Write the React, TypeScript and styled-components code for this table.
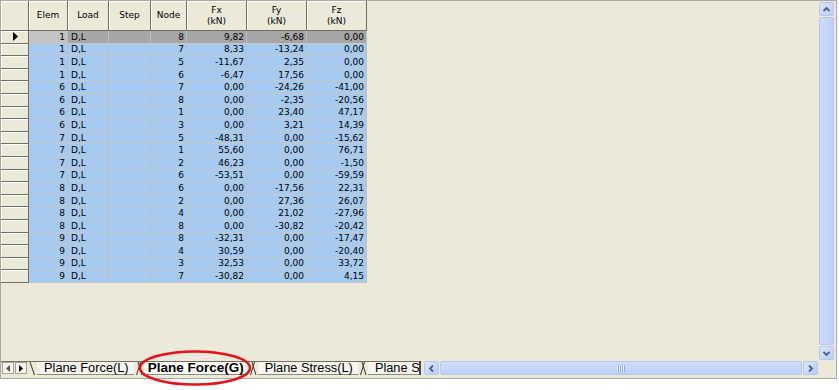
import React from 'react';
import styled, { createGlobalStyle } from 'styled-components';

const BEIGE = '#ece9d8';
const DARK = '#716f64';
const BLUE = '#a6caf0';
const ARROW = '#4d6185';

const GlobalStyle = createGlobalStyle`
  html, body {
    margin: 0;
    padding: 0;
    background: #fff;
  }
  body {
    font-family: "Liberation Sans", Arial, sans-serif;
  }
`;

const Page = styled.div`
  position: relative;
  width: 839px;
  height: 390px;
`;

const Frame = styled.div`
  width: 837px;
  height: 379px;
  box-sizing: border-box;
  border: 1px solid #a9a8a2;
  background: ${BEIGE};
  display: flex;
  flex-direction: column;
`;

const Main = styled.div`
  display: flex;
  height: 360px;
`;

const GridArea = styled.div`
  flex: 1;
  overflow: hidden;
`;

const Grid = styled.div`
  display: grid;
  grid-template-columns: 28px 39px 41px 42px 36px 60px 60px 60px;
  grid-template-rows: 30px;
  grid-auto-rows: 12.6px;
  width: 366px;
  font-family: "DejaVu Sans", Tahoma, sans-serif;
  font-size: 9px;
  color: #000;
`;

const HeadCell = styled.div`
  box-sizing: border-box;
  display: flex;
  align-items: center;
  justify-content: center;
  text-align: center;
  line-height: 11px;
  background: ${BEIGE};
  border-right: 1px solid ${DARK};
  border-bottom: 1px solid ${DARK};
  box-shadow: inset 1px 1px 0 #fff;
`;

const RowHead = styled.div`
  box-sizing: border-box;
  display: flex;
  align-items: center;
  padding-left: 12px;
  background: ${BEIGE};
  border-right: 1px solid ${DARK};
  border-bottom: 1px solid ${DARK};
  box-shadow: inset 1px 1px 0 #fff;
`;

type Tone = 'blue' | 'sel' | 'selLight';

const toneBg: Record<Tone, string> = {
  blue: BLUE,
  sel: '#a6a6a6',
  selLight: '#c4c4c4',
};

const Cell = styled.div<{ $align: 'left' | 'right'; $tone: Tone }>`
  box-sizing: border-box;
  display: flex;
  align-items: center;
  justify-content: ${(p) => (p.$align === 'right' ? 'flex-end' : 'flex-start')};
  padding: 0 2px 0 3px;
  white-space: nowrap;
  background: ${(p) => toneBg[p.$tone]};
  border-right: 1px solid #b9c0c8;
  border-bottom: 1px solid #c3c8ce;
`;

const VScroll = styled.div`
  width: 15px;
  margin: 1px 2px 1px 1px;
  display: flex;
  flex-direction: column;
  gap: 1px;
`;

const ScrollBtn = styled.div`
  width: 15px;
  height: 14px;
  box-sizing: border-box;
  border: 1px solid #b5c8f3;
  border-radius: 2px;
  background: linear-gradient(135deg, #dce6fd, #b8ccf9);
  display: flex;
  align-items: center;
  justify-content: center;
  flex-shrink: 0;
`;

const Thumb = styled.div<{ $horizontal?: boolean }>`
  flex: 1;
  box-sizing: border-box;
  border: 1px solid #b5c8f3;
  border-radius: 2px;
  background: ${(p) =>
    p.$horizontal
      ? 'linear-gradient(180deg, #cfdcfd, #bdd0fa)'
      : 'linear-gradient(90deg, #cfdcfd, #bdd0fa)'};
  display: flex;
  align-items: center;
  justify-content: center;
`;

const Bottom = styled.div`
  display: flex;
  height: 14px;
`;

const TabBar = styled.div`
  width: 418px;
  display: flex;
  overflow: hidden;
  box-sizing: border-box;
  border-top: 1px solid ${DARK};
  background: ${BEIGE};
`;

const NavBtn = styled.div`
  width: 12px;
  height: 12px;
  box-sizing: border-box;
  border: 1px solid #a5a396;
  background: #f4f3ee;
  display: flex;
  align-items: center;
  justify-content: center;
  flex-shrink: 0;
  margin-left: 1px;
`;

const Tab = styled.div<{ $active?: boolean }>`
  flex-shrink: 0;
  display: flex;
  align-items: center;
  padding: ${(p) => (p.$active ? '0 4px' : '0 5px 0 7px')};
  margin-top: ${(p) => (p.$active ? '-1px' : '0')};
  background: ${(p) => (p.$active ? '#fff' : '#f6f5f0')};
  border-bottom: 1px solid #8c8a80;
  font-size: ${(p) => (p.$active ? '13.5px' : '12.8px')};
  font-weight: ${(p) => (p.$active ? 'bold' : 'normal')};
  line-height: 12px;
  white-space: nowrap;
  color: #000;
`;

const SlantBox = styled.svg`
  flex-shrink: 0;
  display: block;
`;

const Divider = styled.div`
  width: 2px;
  background: #4a4a4a;
  margin-right: 3px;
  flex-shrink: 0;
`;

const HScroll = styled.div`
  flex: 1;
  display: flex;
  gap: 1px;
  margin-right: 1px;
`;

const Corner = styled.div`
  width: 15px;
  margin-right: 2px;
  background: ${BEIGE};
`;

const Annotation = styled.svg`
  position: absolute;
  left: 137px;
  top: 349px;
  pointer-events: none;
`;

type Row = [number, number, string, string, string];

const rows: Row[] = [
  [1, 8, '9,82', '-6,68', '0,00'],
  [1, 7, '8,33', '-13,24', '0,00'],
  [1, 5, '-11,67', '2,35', '0,00'],
  [1, 6, '-6,47', '17,56', '0,00'],
  [6, 7, '0,00', '-24,26', '-41,00'],
  [6, 8, '0,00', '-2,35', '-20,56'],
  [6, 1, '0,00', '23,40', '47,17'],
  [6, 3, '0,00', '3,21', '14,39'],
  [7, 5, '-48,31', '0,00', '-15,62'],
  [7, 1, '55,60', '0,00', '76,71'],
  [7, 2, '46,23', '0,00', '-1,50'],
  [7, 6, '-53,51', '0,00', '-59,59'],
  [8, 6, '0,00', '-17,56', '22,31'],
  [8, 2, '0,00', '27,36', '26,07'],
  [8, 4, '0,00', '21,02', '-27,96'],
  [8, 8, '0,00', '-30,82', '-20,42'],
  [9, 8, '-32,31', '0,00', '-17,47'],
  [9, 4, '30,59', '0,00', '-20,40'],
  [9, 3, '32,53', '0,00', '33,72'],
  [9, 7, '-30,82', '0,00', '4,15'],
];

const tabs = [
  { label: 'Plane Force(L)' },
  { label: 'Plane Force(G)', active: true },
  { label: 'Plane Stress(L)' },
  { label: 'Plane Stress(G)' },
];

const Chevron = ({ dir }: { dir: 'up' | 'down' | 'left' | 'right' }) => {
  const rot = { up: 0, right: 90, down: 180, left: 270 }[dir];
  return (
    <svg width="9" height="9" viewBox="0 0 9 9" style={{ transform: `rotate(${rot}deg)` }}>
      <polyline points="1.5,6 4.5,3 7.5,6" fill="none" stroke={ARROW} strokeWidth="1.8" />
    </svg>
  );
};

const Slant = ({ join }: { join?: boolean }) =>
  join ? (
    <SlantBox width="10" height="13" viewBox="0 0 10 13">
      <line x1="6.5" y1="0" x2="2.5" y2="13" stroke="#333" strokeWidth="1" />
      <line x1="4" y1="0" x2="8" y2="13" stroke="#333" strokeWidth="1" />
    </SlantBox>
  ) : (
    <SlantBox width="10" height="13" viewBox="0 0 10 13">
      <line x1="3" y1="0" x2="7.5" y2="13" stroke="#333" strokeWidth="1" />
    </SlantBox>
  );

const Grip = () => (
  <svg width="8" height="7" viewBox="0 0 8 7">
    {[0, 2, 4, 6].map((x) => (
      <g key={x}>
        <line x1={x + 0.5} y1="0" x2={x + 0.5} y2="7" stroke="#eef3fe" />
        <line x1={x + 1.5} y1="0" x2={x + 1.5} y2="7" stroke="#8caae6" />
      </g>
    ))}
  </svg>
);

const Marker = () => (
  <svg width="5" height="9" viewBox="0 0 5 9">
    <polygon points="0,0 5,4.5 0,9" fill="#000" />
  </svg>
);

const NavArrow = ({ right }: { right?: boolean }) => (
  <svg width="4" height="7" viewBox="0 0 4 7">
    <polygon points={right ? '0,0 4,3.5 0,7' : '4,0 0,3.5 4,7'} fill={right ? '#000' : '#555'} />
  </svg>
);

export default function App() {
  return (
    <Page>
      <GlobalStyle />
      <Frame>
        <Main>
          <GridArea>
            <Grid>
              <HeadCell />
              <HeadCell>Elem</HeadCell>
              <HeadCell>Load</HeadCell>
              <HeadCell>Step</HeadCell>
              <HeadCell>Node</HeadCell>
              <HeadCell>
                <span>
                  Fx
                  <br />
                  (kN)
                </span>
              </HeadCell>
              <HeadCell>
                <span>
                  Fy
                  <br />
                  (kN)
                </span>
              </HeadCell>
              <HeadCell>
                <span>
                  Fz
                  <br />
                  (kN)
                </span>
              </HeadCell>
              {rows.map(([elem, node, fx, fy, fz], i) => {
                const tone: Tone = i === 0 ? 'sel' : 'blue';
                return (
                  <React.Fragment key={i}>
                    <RowHead>{i === 0 && <Marker />}</RowHead>
                    <Cell $align="right" $tone={i === 0 ? 'selLight' : 'blue'}>
                      {elem}
                    </Cell>
                    <Cell $align="left" $tone={tone}>
                      D,L
                    </Cell>
                    <Cell $align="left" $tone={tone} />
                    <Cell $align="right" $tone={tone}>
                      {node}
                    </Cell>
                    <Cell $align="right" $tone={tone}>
                      {fx}
                    </Cell>
                    <Cell $align="right" $tone={tone}>
                      {fy}
                    </Cell>
                    <Cell $align="right" $tone={tone}>
                      {fz}
                    </Cell>
                  </React.Fragment>
                );
              })}
            </Grid>
          </GridArea>
          <VScroll>
            <ScrollBtn>
              <Chevron dir="up" />
            </ScrollBtn>
            <Thumb />
            <ScrollBtn>
              <Chevron dir="down" />
            </ScrollBtn>
          </VScroll>
        </Main>
        <Bottom>
          <TabBar>
            <NavBtn>
              <NavArrow />
            </NavBtn>
            <NavBtn>
              <NavArrow right />
            </NavBtn>
            <Slant />
            {tabs.map((t, i) => (
              <React.Fragment key={t.label}>
                {i > 0 && <Slant join />}
                <Tab $active={t.active}>{t.label}</Tab>
              </React.Fragment>
            ))}
          </TabBar>
          <Divider />
          <HScroll>
            <ScrollBtn>
              <Chevron dir="left" />
            </ScrollBtn>
            <Thumb $horizontal>
              <Grip />
            </Thumb>
            <ScrollBtn>
              <Chevron dir="right" />
            </ScrollBtn>
          </HScroll>
          <Corner />
        </Bottom>
      </Frame>
      <Annotation width="116" height="42" viewBox="0 0 116 42">
        <ellipse cx="58" cy="19" rx="55" ry="16.5" fill="none" stroke="#e5141c" strokeWidth="2.6" />
      </Annotation>
    </Page>
  );
}
